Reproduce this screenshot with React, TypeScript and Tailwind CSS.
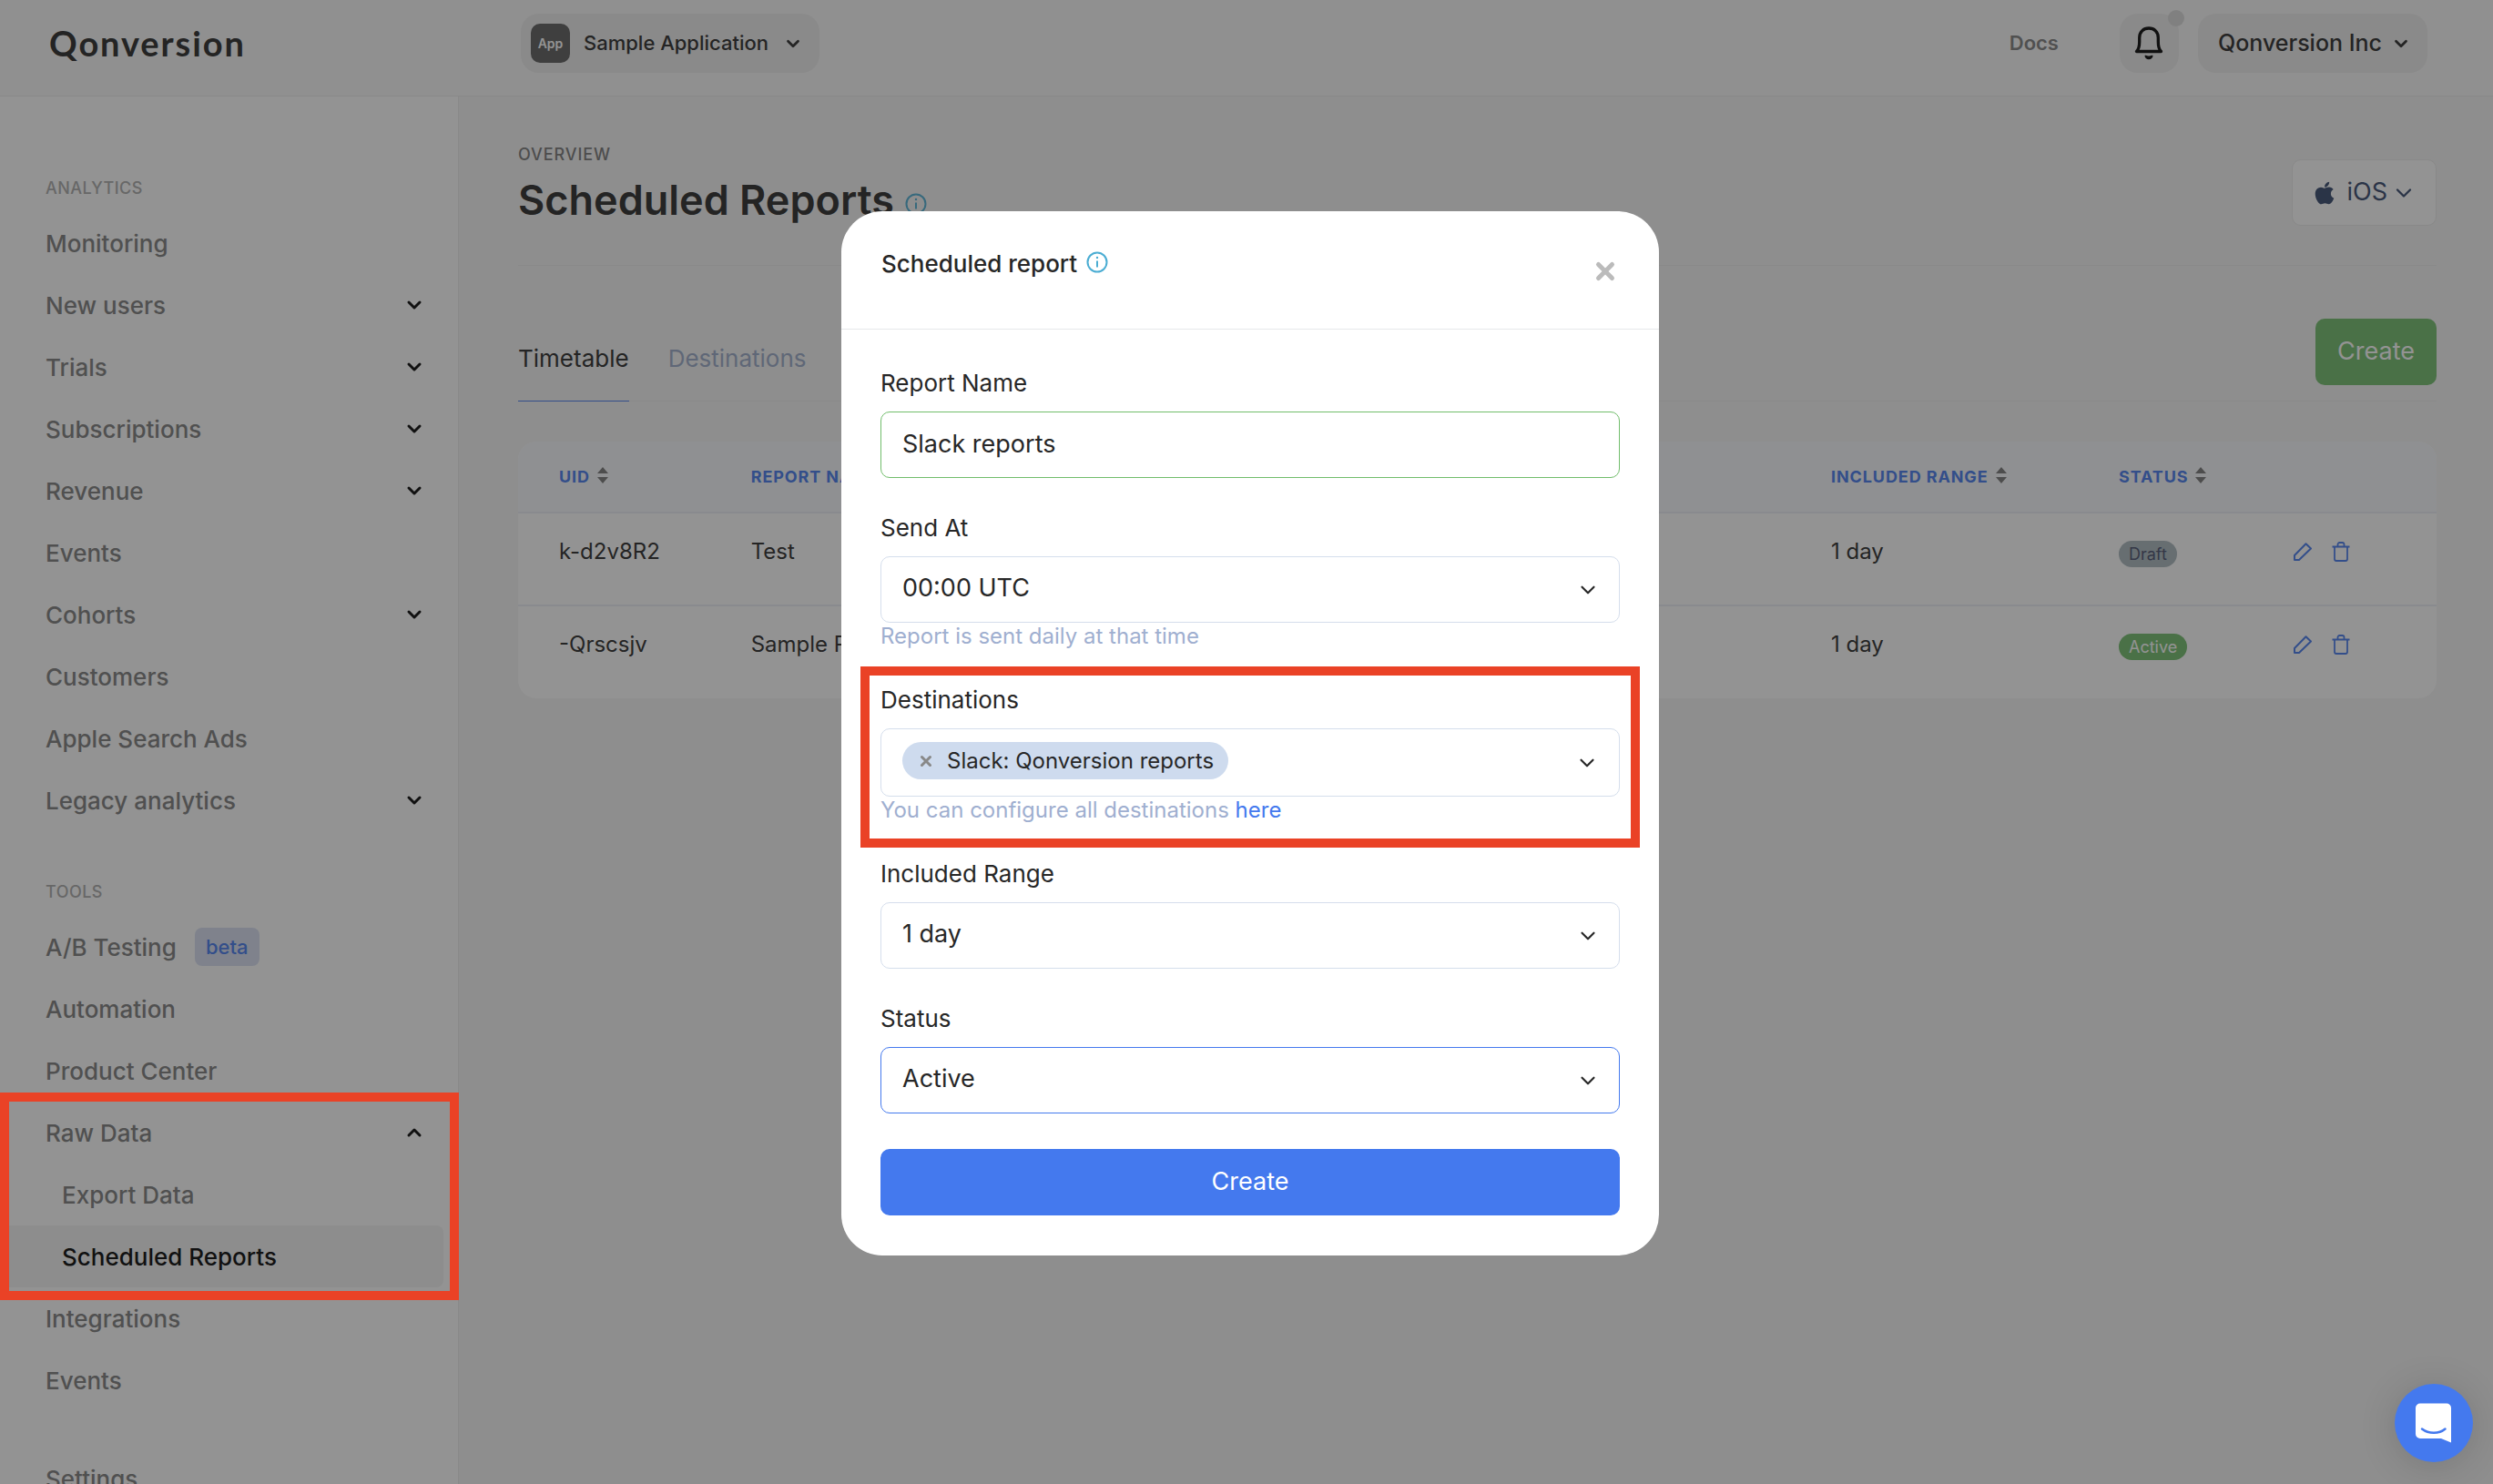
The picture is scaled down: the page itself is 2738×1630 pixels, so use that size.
import type { ReactNode } from 'react';
import { ChevronDown, ChevronUp, X } from 'lucide-react';
import { FaApple } from 'react-icons/fa';

interface NavItem {
  label: string;
  badge?: string;
  expandable?: boolean;
}

interface Report {
  uid: string;
  name: string;
  range: string;
  status: 'Draft' | 'Active';
}

const ANALYTICS: NavItem[] = [
  { label: 'Monitoring' },
  { label: 'New users', expandable: true },
  { label: 'Trials', expandable: true },
  { label: 'Subscriptions', expandable: true },
  { label: 'Revenue', expandable: true },
  { label: 'Events' },
  { label: 'Cohorts', expandable: true },
  { label: 'Customers' },
  { label: 'Apple Search Ads' },
  { label: 'Legacy analytics', expandable: true },
];

const TOOLS: NavItem[] = [
  { label: 'A/B Testing', badge: 'beta' },
  { label: 'Automation' },
  { label: 'Product Center' },
];

const REPORTS: Report[] = [
  { uid: 'k-d2v8R2', name: 'Test', range: '1 day', status: 'Draft' },
  { uid: '-Qrscsjv', name: 'Sample Report', range: '1 day', status: 'Active' },
];

const STATUS_STYLES: Record<Report['status'], string> = {
  Draft: 'bg-[#a9b7bd] text-[#454c6b]',
  Active: 'bg-[#71bd6b] text-white',
};

function BellIcon() {
  return (
    <svg width="32" height="40" viewBox="0 0 32 40" fill="none" className="text-black">
      <path
        d="M2.500 28.500h27c-2.600-2.600-3.200-5.400-3.200-10.500v-4.500c0-6.400-4.300-10.500-10.300-10.500S5.700 7.100 5.700 13.500v4.500c0 5.100-.6 7.900-3.200 10.500Z"
        stroke="currentColor"
        strokeWidth="3.300"
        strokeLinejoin="round"
      />
      <path d="M11.500 33c1.500-1 2.800.5 4.500.5s3-1.500 4.500-.5c0 2.600-1.900 4.200-4.500 4.200s-4.500-1.600-4.500-4.200Z" fill="currentColor" />
    </svg>
  );
}

function InfoIcon() {
  return (
    <svg width="24" height="24" viewBox="0 0 24 24" fill="none" className="shrink-0 text-[#4badd3]">
      <circle cx="12" cy="12" r="10.500" stroke="currentColor" strokeWidth="2" />
      <path d="M12 10.500v7" stroke="currentColor" strokeWidth="2" />
      <circle cx="12" cy="7" r="1.200" fill="currentColor" />
    </svg>
  );
}

function SortIcon() {
  return (
    <svg width="12" height="18" viewBox="0 0 12 18" className="mb-1 text-[#777]">
      <path d="M6 0l6 7H0zM6 18l-6-7h12z" fill="currentColor" />
    </svg>
  );
}

function PencilIcon() {
  return (
    <svg width="20" height="20" viewBox="0 0 20 20" fill="none" stroke="currentColor" strokeWidth="2" strokeLinejoin="round">
      <path d="M1 19v-5L13.500 1.200 19 6.500 6 19Z" />
    </svg>
  );
}

function TrashIcon() {
  return (
    <svg width="20" height="22" viewBox="0 0 20 22" fill="none" stroke="currentColor" strokeWidth="1.800">
      <path d="M.5 5.500h19M3 5.500V19a2 2 0 0 0 2 2h10a2 2 0 0 0 2-2V5.500M6.500 5V3a2 2 0 0 1 2-2h3a2 2 0 0 1 2 2v2" />
    </svg>
  );
}

function NavLink({ item }: { item: NavItem }) {
  return (
    <a href="#" className="flex h-[68px] items-center pr-9 pl-[50px] text-[26px] font-medium text-[#7c7c7c]">
      {item.label}
      {item.badge && (
        <span className="ml-5 flex h-[42px] items-center rounded-lg bg-[#d7def2] px-3 text-[22px] text-[#4479ee]">{item.badge}</span>
      )}
      {item.expandable && <ChevronDown size={24} strokeWidth={3} className="ml-auto text-black" />}
    </a>
  );
}

function Sidebar() {
  return (
    <nav className="w-[504px] shrink-0 border-r border-[#ebebeb] bg-white pt-[87px]">
      <h2 className="mb-3 pl-[50px] text-[18px] leading-7 font-medium tracking-wide text-[#aaa]">ANALYTICS</h2>
      {ANALYTICS.map((item) => <NavLink key={item.label} item={item} />)}

      <h2 className="mt-[53px] mb-3 pl-[50px] text-[18px] leading-7 font-medium tracking-wide text-[#aaa]">TOOLS</h2>
      {TOOLS.map((item) => <NavLink key={item.label} item={item} />)}
      <div className="relative">
        <a href="#" className="flex h-[68px] items-center justify-between pr-9 pl-[50px] text-[26px] font-medium text-[#7c7c7c]">
          Raw Data
          <ChevronUp size={24} strokeWidth={3} className="text-black" />
        </a>
        <a href="#" className="flex h-[68px] items-center pl-[68px] text-[26px] font-medium text-[#7c7c7c]">Export Data</a>
        <a href="#" className="mr-4 flex h-[68px] items-center rounded-lg bg-[#f4f4f4] pl-[68px] text-[26px] font-medium text-black">
          Scheduled Reports
        </a>
        <div className="pointer-events-none absolute inset-x-0 -top-2.5 -bottom-3.5 z-40 -mr-px border-[10px] border-[#ea4226]" />
      </div>
      <NavLink item={{ label: 'Integrations' }} />
      <NavLink item={{ label: 'Events' }} />
      <div className="mt-10">
        <NavLink item={{ label: 'Settings' }} />
      </div>
    </nav>
  );
}

function Header() {
  return (
    <header className="flex h-[106px] shrink-0 items-start border-b border-[#ebebeb] bg-[#f9f9f9] pt-[15px] pr-[72px] pl-[54px]">
      <div className="flex h-[65px] w-[518px] items-center font-[Lato] text-[38px] font-bold tracking-wider text-[#272727]">
        Qonversion
      </div>
      <button className="flex h-[65px] items-center rounded-[20px] bg-[#ededed] pr-[18px] pl-[11px] text-[22px] font-medium text-[#272727]">
        <span className="mr-[15px] flex size-[43px] items-center justify-center rounded-[10px] bg-[#5a5a5a] text-[14px] font-semibold text-white">App</span>
        Sample Application
        <ChevronDown size={22} strokeWidth={3} className="ml-4" />
      </button>
      <a href="#" className="ml-auto flex h-[65px] items-center text-[22px] font-semibold text-[#7c7c7c]">Docs</a>
      <button aria-label="Notifications" className="relative ml-[67px] flex size-[65px] items-center justify-center rounded-[20px] bg-[#ededed]">
        <BellIcon />
        <span className="absolute -top-1 -right-1.5 size-[18px] rounded-full bg-[#dadada]" />
      </button>
      <button className="ml-[21px] flex h-[65px] items-center rounded-[20px] bg-[#ededed] pr-[18px] pl-[22px] text-[25px] font-medium text-[#272727]">
        Qonversion Inc
        <ChevronDown size={22} strokeWidth={3} className="ml-2.5" />
      </button>
    </header>
  );
}

function ReportsTable() {
  return (
    <div className="mt-11 overflow-hidden rounded-[20px] bg-white">
      <table className="w-full table-fixed text-left text-[24px] leading-[34px] text-[#272727]">
        <thead className="bg-[#f8fafd] text-[18px] tracking-wider text-[#4479ee]">
          <tr className="h-[78px] border-b-2 border-[#eceef5]">
            <th className="w-[10%] pl-[45px] font-bold"><span className="flex items-center gap-2">UID <SortIcon /></span></th>
            <th className="pl-[45px] font-bold"><span className="flex items-center gap-2">REPORT NAME <SortIcon /></span></th>
            <th className="w-[15%] pl-[45px] font-bold"><span className="flex items-center gap-2">INCLUDED RANGE <SortIcon /></span></th>
            <th className="w-[192px] pl-[45px] font-bold"><span className="flex items-center gap-2">STATUS <SortIcon /></span></th>
            <th className="w-[202px]" />
          </tr>
        </thead>
        <tbody>
          {REPORTS.map((report) => (
            <tr key={report.uid} className="h-[102px] border-b-2 border-[#eceef5] align-top last:border-0">
              <td className="pt-[25px] pl-[45px]">{report.uid}</td>
              <td className="pt-[25px] pl-[45px]">{report.name}</td>
              <td className="pt-[25px] pl-[45px]">{report.range}</td>
              <td className="pt-[25px] pl-[45px]">
                <span className="flex h-[38px] items-center">
                  <span className={`rounded-full px-[11px] text-[18px] leading-[29px] ${STATUS_STYLES[report.status]}`}>{report.status}</span>
                </span>
              </td>
              <td className="pt-[25px] pl-[45px] text-[#4479ee]">
                <span className="flex h-[34px] items-center gap-[22px]">
                  <button aria-label={`Edit ${report.uid}`}><PencilIcon /></button>
                  <button aria-label={`Delete ${report.uid}`}><TrashIcon /></button>
                </span>
              </td>
            </tr>
          ))}
        </tbody>
      </table>
    </div>
  );
}

function ReportsPage() {
  return (
    <main className="grow pt-[52px] pr-[62px] pl-[65px]">
      <div className="flex items-end justify-between border-b border-[#ebebeb] pb-[43px]">
        <div>
          <p className="text-[18px] leading-6 font-medium tracking-wider text-[#777]">OVERVIEW</p>
          <h1 className="mt-2.5 flex items-center gap-3 text-[45px] leading-[56px] font-semibold text-[#272727]">
            Scheduled Reports
            <span className="mt-2"><InfoIcon /></span>
          </h1>
        </div>
        <button className="flex h-[73px] items-center rounded-[10px] border border-[#ebebeb] bg-white px-[21px] text-[27px] text-[#32456b]">
          <FaApple size={28} className="mr-2.5" />
          iOS
          <ChevronDown size={28} strokeWidth={2} className="ml-1" />
        </button>
      </div>

      <div className="flex items-end justify-between border-b border-[#ebebeb] pt-[58px]">
        <div className="-mb-px flex gap-[43px] text-[26px] leading-[34px]">
          <a href="#" className="border-b border-[#4479ee] pb-[29px] text-[#272727]">Timetable</a>
          <a href="#" className="pb-[29px] text-[#9aaac8]">Destinations</a>
        </div>
        <button className="mb-[17px] h-[73px] rounded-[10px] bg-[#71bd6b] px-6 text-[27px] text-white">Create</button>
      </div>

      <ReportsTable />
    </main>
  );
}

interface FieldProps {
  id: string;
  label: string;
  hint?: ReactNode;
  children: ReactNode;
}

function Field({ id, label, hint, children }: FieldProps) {
  return (
    <div className="relative">
      <label htmlFor={id} className="mb-3 block text-[26px] leading-[38px]">{label}</label>
      {children}
      {hint && <p className="text-[24px] leading-[30px] text-[#9fafd0]">{hint}</p>}
    </div>
  );
}

function SelectBox({ id, value, active }: { id: string; value: string; active?: boolean }) {
  return (
    <div className="relative">
      <select
        id={id}
        className={`h-[73px] w-full appearance-none rounded-[10px] border bg-white px-[23px] pb-0.5 text-[27px] outline-none ${active ? 'border-[#4479ee]' : 'border-[#d5deec]'}`}
      >
        <option>{value}</option>
      </select>
      <ChevronDown size={26} strokeWidth={2} className="pointer-events-none absolute top-6 right-[22px]" />
    </div>
  );
}

function ReportModal() {
  return (
    <div className="fixed inset-0 z-30 flex items-start justify-center bg-[#222]/49 pt-[232px] pl-2">
      <div role="dialog" aria-labelledby="modal-title" className="w-[898px] rounded-[45px] bg-white text-[#272727]">
        <div className="flex h-[130px] items-start justify-between border-b border-[#e6e8ea] px-11">
          <div className="mt-10 flex items-start gap-2.5">
            <h2 id="modal-title" className="text-[26px] leading-9 font-medium">Scheduled report</h2>
            <span className="mt-1"><InfoIcon /></span>
          </div>
          <button aria-label="Close" className="mt-[51px] text-[#bbb]">
            <X size={30} strokeWidth={4} />
          </button>
        </div>

        <form className="flex flex-col gap-9 px-[43px] pt-10 pb-11">
          <Field id="name" label="Report Name">
            <input
              id="name"
              defaultValue="Slack reports"
              className="block h-[73px] w-full rounded-[10px] border border-[#71bd6b] px-[23px] pb-0.5 text-[27px] outline-none"
            />
          </Field>

          <Field id="send-at" label="Send At" hint="Report is sent daily at that time">
            <SelectBox id="send-at" value="00:00 UTC" />
          </Field>

          <Field
            id="destinations"
            label="Destinations"
            hint={<>You can configure all destinations <a href="#" className="text-[#4479ee]">here</a></>}
          >
            <button
              id="destinations"
              type="button"
              className="flex h-[75px] w-full items-center justify-between rounded-[10px] border border-[#d5deec] pr-[22px] pl-[23px]"
            >
              <span className="mb-1 flex h-[41px] items-center rounded-full bg-[#cedbee] pr-4 pl-[17px] text-[24px]">
                <X size={18} strokeWidth={4} className="mr-3.5 text-[#888]" />
                Slack: Qonversion reports
              </span>
              <ChevronDown size={26} strokeWidth={2} />
            </button>
            <div className="pointer-events-none absolute -inset-x-[22px] -top-[18px] -bottom-[26px] border-[10px] border-[#ea4226]" />
          </Field>

          <Field id="range" label="Included Range">
            <SelectBox id="range" value="1 day" />
          </Field>

          <Field id="status" label="Status">
            <SelectBox id="status" value="Active" active />
          </Field>

          <button type="button" className="mt-[3px] h-[73px] rounded-[10px] bg-[#4479ee] text-[27px] text-white">Create</button>
        </form>
      </div>
    </div>
  );
}

function ChatLauncher() {
  return (
    <button
      aria-label="Open chat"
      className="fixed right-[22px] bottom-6 z-50 flex size-[86px] items-center justify-center rounded-full bg-[#4479ee] shadow-[0_4px_40px_rgba(0,0,0,0.15)]"
    >
      <svg width="40" height="44" viewBox="0 0 40 44" fill="none">
        <path d="M5 0.500h29a5 5 0 0 1 5 5v38l-11-4.500H5a5 5 0 0 1-5-5v-28.500a5 5 0 0 1 5-5Z" fill="#fff" />
        <path d="M7 28.500c7.500 5.800 18.500 5.800 25.500 0" stroke="#4479ee" strokeWidth="2.500" strokeLinecap="round" />
      </svg>
    </button>
  );
}

export default function App() {
  return (
    <div className="flex h-screen flex-col overflow-hidden bg-[#f5f5f5] font-[Inter,sans-serif]">
      <Header />
      <div className="flex grow">
        <Sidebar />
        <ReportsPage />
      </div>
      <ReportModal />
      <ChatLauncher />
    </div>
  );
}
